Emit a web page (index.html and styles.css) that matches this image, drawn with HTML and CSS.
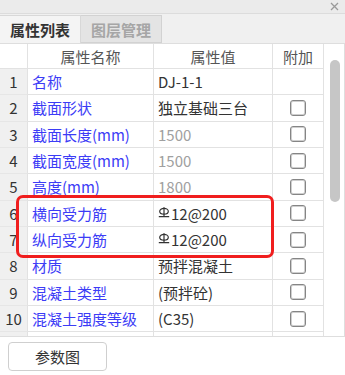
FILE: index.html
```html
<!DOCTYPE html>
<html lang="zh">
<head>
<meta charset="utf-8">
<link rel="stylesheet" href="styles.css">
</head>
<body>
<div class="panel">
  <div class="titlebar">
    <svg class="close" width="9" height="9" viewBox="0 0 9 9"><path d="M1 1L8 8M8 1L1 8" stroke="#9a9a9a" stroke-width="1.3" fill="none"/></svg>
  </div>
  <div class="tabs">
    <div class="tab tab-active">属性列表</div>
    <div class="tab tab-idle">图层管理</div>
  </div>
  <div class="tablewrap">
    <div class="grid">
      <div class="cell head"></div><div class="cell head">属性名称</div><div class="cell head">属性值</div><div class="cell head">附加</div>

      <div class="cell num">1</div><div class="cell name">名称</div><div class="cell val">DJ-1-1</div><div class="cell extra"></div>
      <div class="cell num">2</div><div class="cell name">截面形状</div><div class="cell val">独立基础三台</div><div class="cell extra"><span class="cb"></span></div>
      <div class="cell num">3</div><div class="cell name">截面长度(mm)</div><div class="cell val muted">1500</div><div class="cell extra"><span class="cb"></span></div>
      <div class="cell num">4</div><div class="cell name">截面宽度(mm)</div><div class="cell val muted">1500</div><div class="cell extra"><span class="cb"></span></div>
      <div class="cell num">5</div><div class="cell name">高度(mm)</div><div class="cell val muted">1800</div><div class="cell extra"><span class="cb"></span></div>
      <div class="cell num">6</div><div class="cell name">横向受力筋</div><div class="cell val"><svg class="rebar" width="12" height="11" viewBox="0 0 12 11"><ellipse cx="6" cy="4.2" rx="4.3" ry="2.9" fill="none" stroke="#333" stroke-width="1.2"/><path d="M6 0.3V9.6M0.8 9.6H11.2" stroke="#333" stroke-width="1.2" fill="none"/></svg>12@200</div><div class="cell extra"><span class="cb"></span></div>
      <div class="cell num">7</div><div class="cell name">纵向受力筋</div><div class="cell val"><svg class="rebar" width="12" height="11" viewBox="0 0 12 11"><ellipse cx="6" cy="4.2" rx="4.3" ry="2.9" fill="none" stroke="#333" stroke-width="1.2"/><path d="M6 0.3V9.6M0.8 9.6H11.2" stroke="#333" stroke-width="1.2" fill="none"/></svg>12@200</div><div class="cell extra"><span class="cb"></span></div>
      <div class="cell num">8</div><div class="cell name">材质</div><div class="cell val">预拌混凝土</div><div class="cell extra"><span class="cb"></span></div>
      <div class="cell num">9</div><div class="cell name">混凝土类型</div><div class="cell val">(预拌砼)</div><div class="cell extra"><span class="cb"></span></div>
      <div class="cell num">10</div><div class="cell name">混凝土强度等级</div><div class="cell val">(C35)</div><div class="cell extra"><span class="cb"></span></div>
      <div class="cell num"></div><div class="cell name"></div><div class="cell val"></div><div class="cell extra"></div>
    </div>
    <div class="scrollbar"><div class="thumb"></div></div>
    <div class="highlight"></div>
  </div>
</div>
<div class="footer">
  <button class="btn">参数图</button>
</div>
</body>
</html>
```

FILE: styles.css
```css
* { box-sizing: border-box; }
html, body {
  margin: 0;
  padding: 0;
  background: #ffffff;
  font-family: "Noto Sans CJK SC", "Noto Sans", sans-serif;
  font-size: 15px;
  color: #333;
}
.panel {
  width: 345px;
}
.titlebar {
  height: 14px;
  background: #ebebeb;
  border-bottom: 1px solid #dcdcdc;
  display: flex;
  justify-content: flex-end;
  align-items: center;
  padding-right: 6px;
}
.close { display: block; }
.tabs {
  height: 29px;
  background: #f0f0f0;
  padding-top: 1px;
  display: flex;
  align-items: stretch;
}
.tab {
  width: 81px;
  display: flex;
  align-items: center;
  justify-content: center;
  font-weight: 700;
  font-size: 15px;
  line-height: 1;
}
.tab-active {
  background: #f4f4f4;
  border-top: 1px solid #d8d8d8;
  border-right: 1px solid #d8d8d8;
  color: #333;
}
.tab-idle {
  background: #e4e4e4;
  border: 1px solid #d2d2d2;
  border-left: none;
  color: #a6a6a6;
}
.tablewrap {
  position: relative;
  height: 294px;
  border-top: 1px solid #dedede;
  border-bottom: 1px solid #dedede;
  border-right: 1px solid #dedede;
  display: flex;
  overflow: hidden;
  background: #fff;
}
.grid {
  width: 324px;
  flex: none;
  display: grid;
  grid-template-columns: 28px 126px 119px 51px;
  grid-template-rows: 25px repeat(11, 26.33px);
  align-content: start;
}
.cell {
  border-right: 1px solid #e2e2e2;
  border-bottom: 1px solid #e2e2e2;
  display: flex;
  align-items: center;
  white-space: nowrap;
  overflow: hidden;
  line-height: 1;
}
.head {
  justify-content: center;
  color: #555;
  background: #fff;
}
.num {
  justify-content: center;
  background: #f0f0f0;
  color: #333;
  border-bottom-color: #e6e6e6;
}
.name {
  padding-left: 4px;
  color: #3c3cf6;
}
.val {
  padding-left: 4px;
  color: #333;
}
.val.muted { color: #a0a0a0; }
.rebar {
  margin-right: 1px;
  margin-top: -2px;
  flex: none;
}
.extra { justify-content: center; }
.cb {
  display: block;
  width: 16px;
  height: 16px;
  border: 1px solid #858585;
  box-shadow: inset 0 0 0 1px #cfcfcf;
  border-radius: 3px;
  background: #fff;
}
.scrollbar {
  flex: 1;
  padding: 16px 0 0 6px;
  background: #fff;
}
.thumb {
  width: 10px;
  height: 142px;
  border-radius: 5px;
  background: #c6c6c6;
}
.highlight {
  position: absolute;
  left: 16px;
  top: 151px;
  width: 258px;
  height: 63px;
  border: 3px solid #f01e1e;
  border-radius: 7px;
  pointer-events: none;
}
.footer {
  padding: 5px 0 0 8px;
}
.btn {
  width: 99px;
  height: 29px;
  background: #fff;
  border: 1px solid #cfcfcf;
  border-radius: 4px;
  font-family: "Noto Sans CJK SC", "Noto Sans", sans-serif;
  font-size: 15px;
  color: #333;
  padding: 0;
  line-height: 1;
}
```
